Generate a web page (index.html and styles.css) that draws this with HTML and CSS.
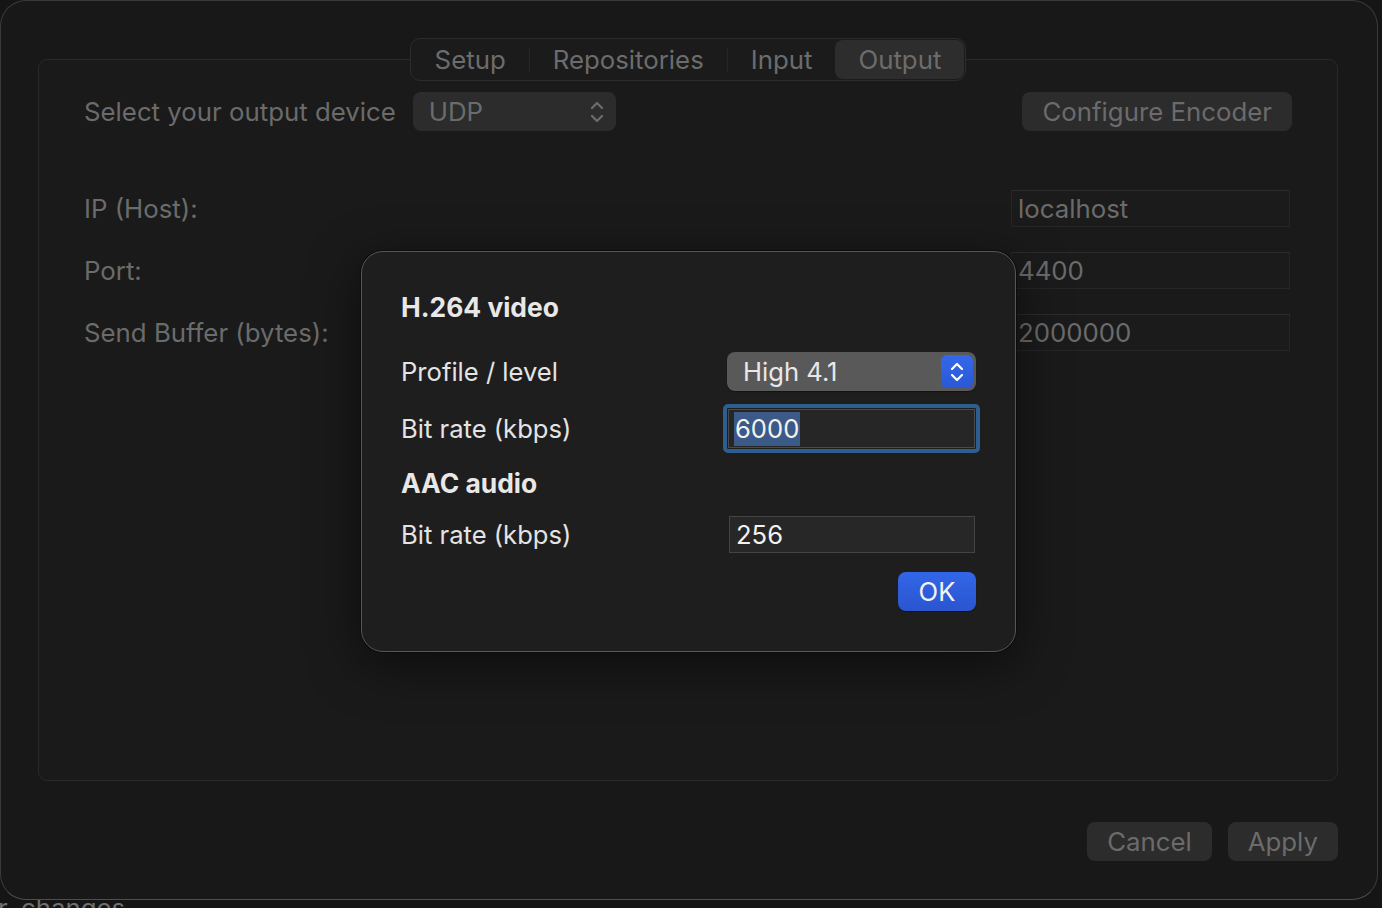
FILE: index.html
```html
<!DOCTYPE html>
<html lang="en">
<head>
    <meta charset="UTF-8">
    <title>Output settings</title>
    <link rel="stylesheet" href="styles.css">
</head>
<body>
    <div class="window">
        <div class="group">
            <div class="tabs">
                <div class="tab">Setup</div>
                <div class="sep"></div>
                <div class="tab">Repositories</div>
                <div class="sep"></div>
                <div class="tab">Input</div>
                <div class="tab selected">Output</div>
            </div>

            <div class="device-row">
                <span class="label">Select your output device</span>
                <div class="popup">
                    <span>UDP</span>
                    <svg class="updown" width="16" height="26" viewBox="0 0 16 26">
                        <path d="M3 9 L8 4 L13 9 M3 17 L8 22 L13 17" fill="none" stroke="#6a6a6a" stroke-width="2.4" stroke-linecap="round" stroke-linejoin="round"/>
                    </svg>
                </div>
                <div class="spacer"></div>
                <div class="button">Configure Encoder</div>
            </div>

            <div class="fields">
                <div class="field-row">
                    <span class="label">IP (Host):</span>
                    <div class="field">localhost</div>
                </div>
                <div class="field-row">
                    <span class="label">Port:</span>
                    <div class="field">4400</div>
                </div>
                <div class="field-row">
                    <span class="label">Send Buffer (bytes):</span>
                    <div class="field">2000000</div>
                </div>
            </div>
        </div>

        <div class="footer">
            <div class="button">Cancel</div>
            <div class="button">Apply</div>
        </div>

        <!-- encoder sheet -->
        <div class="sheet">
            <div class="heading">H.264 video</div>
            <div class="sheet-row profile-row">
                <span>Profile / level</span>
                <div class="select">
                    <span>High 4.1</span>
                    <div class="stepper">
                        <svg width="18" height="26" viewBox="0 0 18 26">
                            <path d="M4 10 L9 5 L14 10 M4 16 L9 21 L14 16" fill="none" stroke="#fff" stroke-width="2.2" stroke-linecap="round" stroke-linejoin="round"/>
                        </svg>
                    </div>
                </div>
            </div>
            <div class="sheet-row video-rate-row">
                <span>Bit rate (kbps)</span>
                <div class="focus-ring">
                    <div class="input"><span class="selection">6000</span></div>
                </div>
            </div>
            <div class="heading audio-heading">AAC audio</div>
            <div class="sheet-row audio-rate-row">
                <span>Bit rate (kbps)</span>
                <div class="input plain">256</div>
            </div>
            <div class="sheet-actions">
                <div class="ok">OK</div>
            </div>
        </div>
    </div>
    <div class="status">r changes</div>
</body>
</html>
```

FILE: styles.css
```css
body {
    margin: 0;
    background: #151515;
    font-family: Inter, "Noto Sans", sans-serif;
    font-size: 25.8px;
    overflow: hidden;
    height: 908px;
}
.window {
    position: relative;
    box-sizing: border-box;
    width: 1378px;
    height: 900px;
    background: #181818;
    border: 1px solid #3a3a3a;
    border-bottom-color: #4e4e4e;
    border-radius: 26px;
    padding: 58px 39px 0 37px;
    display: flex;
    flex-direction: column;
}
.group {
    height: 722px;
    box-sizing: border-box;
    border: 1px solid #292929;
    border-radius: 9px;
    background: #1a1a1a;
    padding: 0 45px;
    display: flex;
    flex-direction: column;
}
.tabs {
    align-self: center;
    margin-top: -22px;
    height: 43px;
    box-sizing: border-box;
    border: 1px solid #2c2c2c;
    border-radius: 10px;
    background: #1b1b1b;
    display: flex;
    align-items: center;
    padding: 0 1px;
}
.tab {
    padding: 0 23px;
    height: 39px;
    line-height: 39px;
    color: #6c6c6c;
    border-radius: 8px;
}
.tab.selected {
    background: #2d2d2d;
}
.sep {
    width: 1px;
    height: 24px;
    background: #262626;
}
.label {
    color: #6b6b6b;
}
.device-row {
    margin-top: 11px;
    display: flex;
    align-items: center;
    height: 39px;
}
.popup {
    margin-left: 17px;
    width: 203px;
    height: 39px;
    box-sizing: border-box;
    background: #2c2c2c;
    border-radius: 8px;
    display: flex;
    align-items: center;
    justify-content: space-between;
    padding: 0 11px 0 16px;
    color: #6b6b6b;
}
.spacer {
    flex: 1;
}
.button {
    height: 39px;
    line-height: 39px;
    padding: 0 20px;
    background: #2c2c2c;
    border-radius: 8px;
    color: #6b6b6b;
}
.fields {
    margin-top: 59px;
    display: flex;
    flex-direction: column;
    gap: 25px;
}
.field-row {
    display: flex;
    align-items: center;
    justify-content: space-between;
}
.field {
    width: 279px;
    height: 37px;
    line-height: 35px;
    box-sizing: border-box;
    margin-right: 2px;
    padding-left: 6px;
    background: #1b1b1b;
    border: 1px solid #262626;
    border-top-color: #2c2c2c;
    color: #6b6b6b;
}
.footer {
    margin-top: 41px;
    display: flex;
    justify-content: flex-end;
    gap: 16px;
}

/* encoder sheet */
.sheet {
    position: absolute;
    left: 360px;
    top: 250px;
    width: 655px;
    height: 401px;
    box-sizing: border-box;
    background: #1e1e1e;
    border: 1px solid #575757;
    border-radius: 22px;
    box-shadow: 0 0 0 1px #0c0c0c, 0 12px 50px rgba(0, 0, 0, 0.55);
    padding: 37px 39px 0 39px;
    color: #e4e4e4;
    font-size: 25.6px;
    display: flex;
    flex-direction: column;
}
.heading {
    font-weight: 700;
    font-size: 26.4px;
    height: 36px;
    line-height: 36px;
    color: #e8e8e8;
}
.sheet-row {
    display: flex;
    align-items: center;
    justify-content: space-between;
}
.profile-row {
    margin-top: 27px;
    height: 39px;
}
.video-rate-row {
    margin-top: 13px;
    height: 49px;
}
.audio-heading {
    margin-top: 12px;
}
.audio-rate-row {
    margin-top: 15px;
    height: 37px;
}
.select {
    width: 249px;
    height: 39px;
    box-sizing: border-box;
    background: #595959;
    border-radius: 8px;
    box-shadow: 0 1px 1px rgba(0, 0, 0, 0.4);
    display: flex;
    align-items: center;
    justify-content: space-between;
    padding: 0 3px 0 16px;
    color: #e8e8e8;
}
.stepper {
    width: 32px;
    height: 33px;
    border-radius: 6px;
    background: linear-gradient(#3468ea, #2a58d6);
    display: flex;
    align-items: center;
    justify-content: center;
}
.focus-ring {
    margin-right: -4px;
    width: 257px;
    height: 49px;
    box-sizing: border-box;
    border: 4px solid #2e5d90;
    border-radius: 5px;
    padding: 1px;
    display: flex;
}
.input {
    flex: 1;
    box-sizing: border-box;
    background: #262626;
    border: 1px solid #4a4a4a;
    display: flex;
    align-items: center;
    padding-left: 5px;
    color: #f2f2f2;
}
.selection {
    background: #3b5a88;
    line-height: 34px;
    padding: 0 1px;
}
.input.plain {
    flex: none;
    width: 246px;
    height: 37px;
    margin-right: 1px;
    background: #272727;
    border-color: #444;
    padding-left: 6px;
}
.sheet-actions {
    margin-top: 19px;
    display: flex;
    justify-content: flex-end;
}
.ok {
    width: 78px;
    height: 39px;
    line-height: 39px;
    text-align: center;
    border-radius: 8px;
    background: linear-gradient(#3266e8, #2a55cf);
    color: #f2f2f2;
    box-shadow: 0 1px 1px rgba(0, 0, 0, 0.4);
}
.status {
    margin-top: -7px;
    margin-left: -2px;
    color: #6f6f6f;
    line-height: 30px;
    word-spacing: 6px;
}
```
